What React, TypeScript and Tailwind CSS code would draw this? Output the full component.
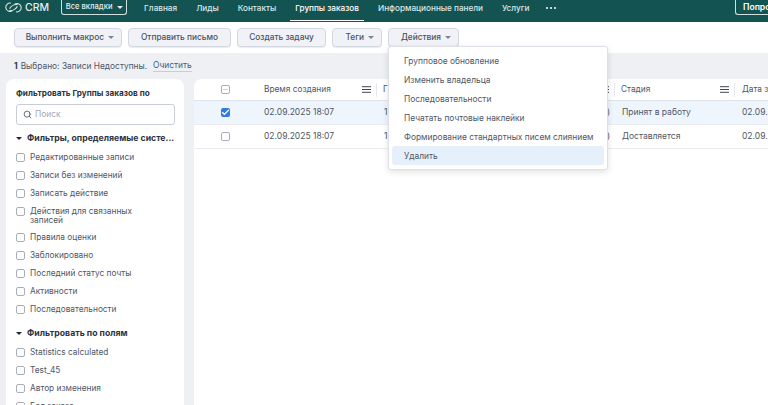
import { Check, Minus, Search } from "lucide-react";

const tabs = ["Главная", "Лиды", "Контакты", "Группы заказов", "Информационные панели", "Услуги"];

const systemFilters = [
  "Редактированные записи",
  "Записи без изменений",
  "Записать действие",
  "Действия для связанных записей",
  "Правила оценки",
  "Заблокировано",
  "Последний статус почты",
  "Активности",
  "Последовательности",
];

const fieldFilters = ["Statistics calculated", "Test_45", "Автор изменения", "Бел заказа"];

const menuItems = [
  "Групповое обновление",
  "Изменить владельца",
  "Последовательности",
  "Печатать почтовые наклейки",
  "Формирование стандартных писем слиянием",
  "Удалить",
];

function Caret({ className }: { className: string }) {
  return <span className={`w-0 h-0 border-x-[3.5px] border-x-transparent border-t-[3.5px] ${className}`} />;
}

function Lines() {
  return (
    <svg width="9" height="7" viewBox="0 0 9 7" className="shrink-0 text-[#3f4654]">
      <path d="M0 .7h9M0 3.5h9M0 6.3h9" stroke="currentColor" strokeWidth="1" fill="none" />
    </svg>
  );
}

function Logo() {
  return (
    <svg width="17" height="13" viewBox="0 0 17 13" fill="none" stroke="#d5e4e2" strokeWidth="1.1" className="shrink-0">
      <path d="M6 2.2a4.2 4.2 0 1 0 1.6 7.4" />
      <path d="M11 10.8a4.2 4.2 0 1 0-1.6-7.4" />
      <path d="M4.6 7.6c1.8-3 5.4-5 8-3.8M12.4 5.4c-1.8 3-5.4 5-8 3.8" />
    </svg>
  );
}

function ToolButton({ label, width, caret }: { label: string; width: string; caret?: boolean }) {
  return (
    <button className={`h-[19px] flex items-center gap-[4px] rounded-[4px] border border-[#d3d8e0] bg-[#f0f2f7] text-[8.3px] font-medium text-[#4a5261] shadow-[0_1px_1px_rgba(0,0,0,0.08)] whitespace-nowrap ${caret ? "justify-end pr-[7px]" : "justify-center"} ${width}`}>
      {label}
      {caret && <Caret className="border-t-[#7c8493]" />}
    </button>
  );
}

function FilterRow({ label }: { label: string }) {
  return (
    <label className="flex items-start gap-[5px] py-[4.5px] text-[8.3px] leading-[9px] text-[#4f5766]">
      <span className="w-[9px] h-[9px] shrink-0 rounded-[2px] border border-[#a9afb9] bg-white" />
      <span className="w-[125px] mb-[-1px]">{label}</span>
    </label>
  );
}

function FilterGroup({ title, items }: { title: string; items: string[] }) {
  return (
    <div>
      <div className="flex items-center gap-[5px] h-[11px] mb-[4px] text-[8.7px] font-bold text-[#2d3340] whitespace-nowrap">
        <Caret className="border-t-[#20252e]" />
        {title}
      </div>
      <div className="flex flex-col">
        {items.map((item) => (
          <FilterRow key={item} label={item} />
        ))}
      </div>
    </div>
  );
}

function HeaderCell({ label, className }: { label: string; className: string }) {
  return (
    <div className={`flex items-center justify-between h-[14px] pl-[6px] pr-[5px] border-r border-[#e5e8ee] text-[8.3px] text-[#4f5766] whitespace-nowrap overflow-hidden ${className}`}>
      {label}
      <Lines />
    </div>
  );
}

function DataRow({ date, stage, selected }: { date: string; stage: string; selected?: boolean }) {
  return (
    <div className={`flex items-center h-[24px] border-b border-[#e9ebf0] text-[8.5px] text-[#4f5766] whitespace-nowrap ${selected ? "bg-[#eff5fd]" : "bg-white"}`}>
      <div className="w-[70px] pl-[27px] shrink-0">
        {selected ? (
          <span className="block w-[9px] h-[9px] rounded-[2px] bg-[#2f7de1]">
            <Check className="w-[9px] h-[9px] text-white" strokeWidth={3.5} />
          </span>
        ) : (
          <span className="block w-[9px] h-[9px] rounded-[2px] border border-[#a9afb9] bg-white" />
        )}
      </div>
      <div className="w-[113px] shrink-0">{date}</div>
      <div className="w-[238px] pl-[7px] shrink-0 flex justify-between pr-[5px]">
        <span>1</span>
        <span>)</span>
      </div>
      <div className="w-[120px] pl-[7px] shrink-0">{stage}</div>
      <div className="pl-[7px]">02.09.</div>
    </div>
  );
}

export default function App() {
  return (
    <div className="w-[768px] h-[405px] overflow-hidden bg-[#eef0f4] font-['Inter',sans-serif] flex flex-col relative">
      {/* Top nav */}
      <div className="h-[22px] bg-[#135352] flex items-start pl-[5px] shrink-0 overflow-hidden">
        <div className="h-[15px] flex items-center">
          <Logo />
          <span className="ml-[3px] text-[10.5px] text-[#e4eeed] font-medium">CRM</span>
        </div>
        <button className="ml-[12px] h-[15px] w-[66px] flex items-center justify-center gap-[4px] rounded-b-[3px] border border-t-0 border-[#cfe0de] text-[7.6px] font-medium text-[#e4eeed] whitespace-nowrap">
          Все вкладки
          <Caret className="border-t-[#e4eeed]" />
        </button>
        <div className="ml-[12px] flex items-start h-full">
          {tabs.map((tab) => (
            <div
              key={tab}
              className={`relative h-full pt-[2.5px] px-[5px] mr-[9px] text-[8.2px] leading-[11px] font-medium whitespace-nowrap ${tab === "Группы заказов" ? "text-white" : "text-[#dbe7e6]"}`}
            >
              {tab}
              {tab === "Группы заказов" && <span className="absolute left-0 right-0 bottom-[1px] h-[1px] bg-white" />}
            </div>
          ))}
          <span className="ml-[3px] mt-[7px] flex gap-[2px]">
            <span className="w-[2px] h-[2px] rounded-full bg-white" />
            <span className="w-[2px] h-[2px] rounded-full bg-white" />
            <span className="w-[2px] h-[2px] rounded-full bg-white" />
          </span>
        </div>
        <div className="ml-auto h-[15px] w-[33px] pl-[7px] flex items-center rounded-bl-[3px] border-l border-b border-[#cfe0de] text-[8.6px] font-semibold text-white overflow-hidden whitespace-nowrap">
          Попро
        </div>
      </div>

      {/* Toolbar */}
      <div className="h-[31px] bg-white flex items-center pl-[14px] gap-[6px] shrink-0">
        <ToolButton label="Выполнить макрос" caret width="w-[108px]" />
        <ToolButton label="Отправить письмо" width="w-[103px]" />
        <ToolButton label="Создать задачу" width="w-[89px]" />
        <ToolButton label="Теги" caret width="w-[50px]" />
        <ToolButton label="Действия" caret width="w-[71px]" />
      </div>

      {/* Selection line */}
      <div className="h-[26px] flex items-center pl-[14px] text-[8.4px] text-[#4f5766] shrink-0">
        <span className="font-bold text-[#2d3340] mr-[3px]">1</span>
        Выбрано: Записи Недоступны.
        <span className="ml-[6px] text-[#3a5f7c] border-b border-[#c4cedb] leading-[11px]">Очистить</span>
      </div>

      <div className="flex flex-1 min-h-0 pl-[6px] gap-[10px]">
        {/* Filter sidebar */}
        <aside className="w-[178px] shrink-0 bg-white rounded-t-[8px] pl-[10px] pr-[9px] pt-[9px] overflow-hidden">
          <div className="text-[8.2px] leading-[11px] font-bold text-[#2d3340] whitespace-nowrap">Фильтровать Группы заказов по</div>
          <div className="mt-[5px] h-[21px] flex items-center gap-[3px] pl-[6px] rounded-[3px] border border-[#c9ced6]">
            <Search className="w-[9px] h-[9px] text-[#4a5261]" strokeWidth={2.2} />
            <span className="text-[8.4px] text-[#a2a8b3]">Поиск</span>
          </div>
          <div className="mt-[8px] flex flex-col gap-[10px]">
            <FilterGroup title="Фильтры, определяемые систе..." items={systemFilters} />
            <FilterGroup title="Фильтровать по полям" items={fieldFilters} />
          </div>
        </aside>

        {/* Table */}
        <main className="flex-1 min-w-0 bg-white rounded-tl-[8px] overflow-hidden">
          <div className="flex items-center h-[22px] border-b border-[#dfe3ea]">
            <div className="w-[70px] pl-[27px] shrink-0">
              <span className="w-[9px] h-[9px] rounded-[2px] border border-[#a9afb9] flex items-center justify-center">
                <Minus className="w-[7px] h-[7px] text-[#a9afb9]" />
              </span>
            </div>
            <div className="w-[113px] shrink-0 flex items-center justify-between h-[14px] pr-[5px] border-r border-[#e5e8ee] text-[8.3px] text-[#4f5766] whitespace-nowrap">
              Время создания
              <Lines />
            </div>
            <HeaderCell label="Г" className="w-[238px] shrink-0" />
            <HeaderCell label="Стадия" className="w-[120px] shrink-0" />
            <div className="pl-[7px] text-[8.3px] text-[#4f5766] whitespace-nowrap">Дата за</div>
          </div>
          <DataRow date="02.09.2025 18:07" stage="Принят в работу" selected />
          <DataRow date="02.09.2025 18:07" stage="Доставляется" />
        </main>
      </div>

      {/* Actions dropdown */}
      <div className="absolute left-[388px] top-[46px] w-[220px] h-[124px] bg-white rounded-[3px] border border-[#dde1e7] shadow-[0_2px_6px_rgba(0,0,0,0.12)] px-[3px] pt-[4.4px] flex flex-col">
        {menuItems.map((item) => (
          <div
            key={item}
            className={`h-[19px] shrink-0 flex items-center pl-[12px] rounded-[3px] text-[8.4px] text-[#4f5766] whitespace-nowrap ${item === "Удалить" ? "bg-[#e6f0fb]" : ""}`}
          >
            {item}
          </div>
        ))}
      </div>
    </div>
  );
}
